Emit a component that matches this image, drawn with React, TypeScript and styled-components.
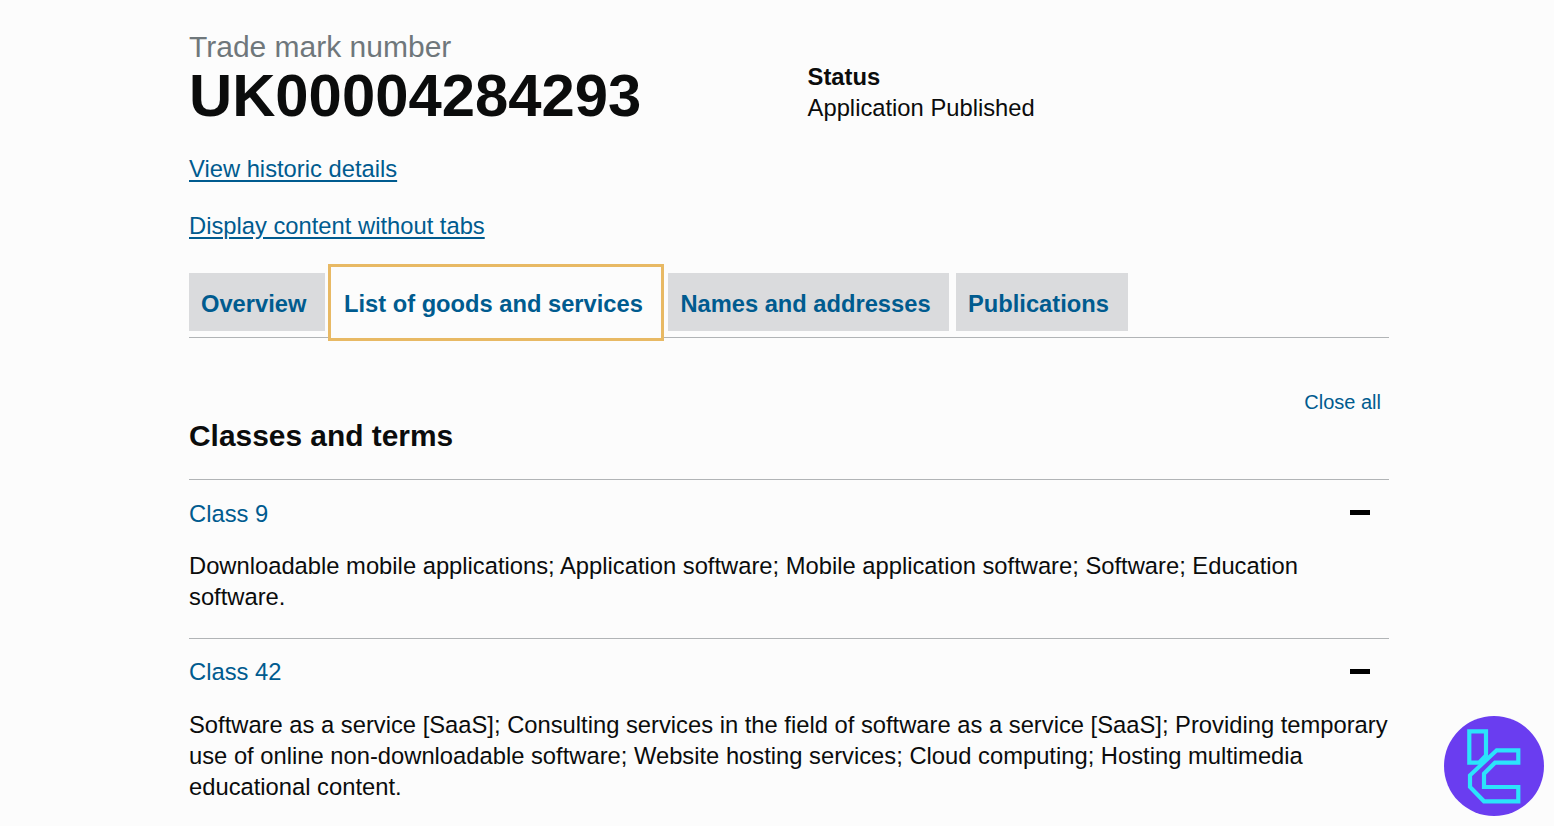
import React from "react";
import styled, { createGlobalStyle } from "styled-components";

const Global = createGlobalStyle`
  html, body { margin: 0; padding: 0; background: #fcfcfc; }
  body { font-family: "Liberation Sans", Arial, sans-serif; color: #0b0c0c; height: 826px; overflow: hidden; }
  a { text-decoration: none; }
`;

const Page = styled.main`
  width: 1200px;
  margin-left: 189px;
  padding-top: 30px;
`;

const Header = styled.header`
  display: flex;
  align-items: flex-start;
`;

const NumberBlock = styled.div`
  width: 618.6px;
`;

const Caption = styled.div`
  font-size: 30px;
  line-height: 34px;
  color: #6f777b;
`;

const Number = styled.h1`
  margin: 0;
  font-size: 59.8px;
  line-height: 64px;
  font-weight: 700;
  color: #0b0c0c;
`;

const StatusBlock = styled.div`
  padding-top: 31px;
  font-size: 23.76px;
  line-height: 31px;
  color: #0b0c0c;
`;

const StatusLabel = styled.div`
  font-weight: 700;
`;

const PlainLink = styled.a`
  display: block;
  width: fit-content;
  font-size: 23.76px;
  line-height: 31px;
  color: #005b8f;
  text-decoration: underline;
  text-underline-offset: 3px;
`;

const Links = styled.div`
  display: flex;
  flex-direction: column;
  gap: 26px;
  padding-top: 25px;
`;

const TabBar = styled.nav`
  display: flex;
  align-items: flex-end;
  height: 74px;
  margin-top: 22px;
  border-bottom: 1px solid #b1b4b6;
`;

const Tab = styled.a<{ $active?: boolean; $w: number; $ml: number; $pad?: number }>`
  box-sizing: border-box;
  display: flex;
  align-items: center;
  width: ${(p) => p.$w}px;
  margin-left: ${(p) => p.$ml}px;
  font-size: 23.7px;
  font-weight: 700;
  color: #005b8f;
  white-space: nowrap;
  ${(p) =>
    p.$active
      ? `height: 77px; margin-bottom: -4px; padding: 4px 0 0 13px; background: #fcfcfc; border: 3px solid #e8b964;`
      : `height: 58px; margin-bottom: 6px; padding: 4px 0 0 ${p.$pad ?? 12}px; background: #dadbdd;`}
`;

const Panel = styled.section`
  padding-top: 50px;
`;

const CloseRow = styled.div`
  display: flex;
  justify-content: flex-end;
  padding-right: 8px;
`;

const CloseAll = styled.a`
  font-size: 20px;
  line-height: 28px;
  color: #005b8f;
`;

const SectionTitle = styled.h2`
  margin: 0;
  padding-top: 2px;
  font-size: 29.9px;
  line-height: 36px;
  font-weight: 700;
  color: #0b0c0c;
`;

const Accordion = styled.div`
  margin-top: 25px;
`;

const Item = styled.article`
  border-top: 1px solid #b1b4b6;
  padding: 18px 0 26px;
`;

const ItemHead = styled.div`
  display: flex;
  align-items: flex-start;
  justify-content: space-between;
  padding-right: 19px;
`;

const ItemTitle = styled.a<{ $lift?: number }>`
  margin-top: ${(p) => -(p.$lift ?? 0)}px;
  margin-bottom: ${(p) => p.$lift ?? 0}px;
  font-size: 23.76px;
  line-height: 31px;
  color: #005b8f;
`;

const Minus = styled.span`
  display: block;
  width: 20px;
  height: 5px;
  margin-top: 12px;
  background: #000;
`;

const ItemBody = styled.p`
  margin: 21px 0 0;
  font-size: 23.76px;
  line-height: 31px;
  color: #0b0c0c;
`;

const Badge = styled.svg`
  position: fixed;
  left: 1444px;
  top: 716px;
  width: 100px;
  height: 100px;
`;

export default function App() {
  return (
    <>
      <Global />
      <Page>
        <Header>
          <NumberBlock>
            <Caption>Trade mark number</Caption>
            <Number>UK00004284293</Number>
          </NumberBlock>
          <StatusBlock>
            <StatusLabel>Status</StatusLabel>
            <div>Application Published</div>
          </StatusBlock>
        </Header>
        <Links>
          <PlainLink href="#">View historic details</PlainLink>
          <PlainLink href="#">Display content without tabs</PlainLink>
        </Links>
        <TabBar>
          <Tab href="#" $w={136} $ml={0}>Overview</Tab>
          <Tab href="#" $active $w={336} $ml={3}>List of goods and services</Tab>
          <Tab href="#" $w={281} $ml={4} $pad={12.4}>Names and addresses</Tab>
          <Tab href="#" $w={172} $ml={7}>Publications</Tab>
        </TabBar>
        <Panel>
          <CloseRow>
            <CloseAll href="#">Close all</CloseAll>
          </CloseRow>
          <SectionTitle>Classes and terms</SectionTitle>
          <Accordion>
            <Item>
              <ItemHead>
                <ItemTitle href="#">Class 9</ItemTitle>
                <Minus />
              </ItemHead>
              <ItemBody>
                Downloadable mobile applications; Application software; Mobile application software; Software; Education software.
              </ItemBody>
            </Item>
            <Item>
              <ItemHead>
                <ItemTitle href="#" $lift={1}>Class 42</ItemTitle>
                <Minus />
              </ItemHead>
              <ItemBody>
                Software as a service [SaaS]; Consulting services in the field of software as a service [SaaS]; Providing temporary use of online non-downloadable software; Website hosting services; Cloud computing; Hosting multimedia educational content.
              </ItemBody>
            </Item>
          </Accordion>
        </Panel>
      </Page>
      <Badge viewBox="0 0 100 100" aria-hidden="true">
        <circle cx="50" cy="50" r="50" fill="#6a3df0" />
        <g fill="none" stroke="#2be4fb" strokeWidth="4.2">
          <path d="M25.3 15.3H42V39.5L35 46.7H25.3Z" />
          <path d="M52.7 34.3H74.3V46.7H51L40 57.7V71H74.3V85.3H40L26 71V59.3Z" />
        </g>
      </Badge>
    </>
  );
}
